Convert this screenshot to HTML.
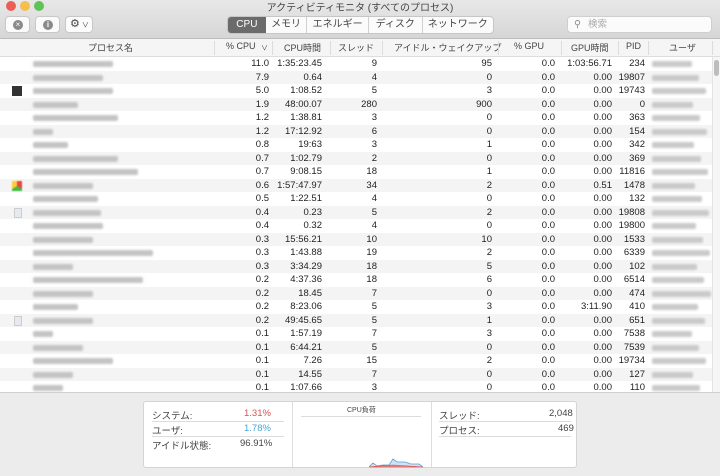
<!DOCTYPE html>
<html><head><meta charset="utf-8"><style>
*{margin:0;padding:0;box-sizing:border-box}
body{width:720px;height:476px;overflow:hidden;background:#ececec;font-family:"Liberation Sans","Noto Sans CJK JP",sans-serif;font-size:9.5px;color:#222;position:relative}
.tb{position:absolute;left:0;top:0;width:720px;height:39px;background:linear-gradient(#e8e8e8,#d6d6d6);border-bottom:1px solid #bdbdbd}
.title{position:absolute;top:-1px;left:0;width:720px;text-align:center;font-size:10px;color:#444}
.dot{position:absolute;top:1px;width:10px;height:10px;border-radius:50%}
.btn{position:absolute;top:16px;height:17px;background:#fbfbfb;border:1px solid #c8c8c8;border-radius:4px}
.seg{position:absolute;top:16px;left:227px;width:267px;height:18px;display:flex;border:1px solid #c6c6c6;border-radius:4px;overflow:hidden;background:#fbfbfb}
.seg div{text-align:center;line-height:16px;font-size:10px;color:#444;border-left:1px solid #d0d0d0;white-space:nowrap;overflow:hidden}
.seg div.on{background:#6b6b6b;color:#fff;border:none}
.search{position:absolute;left:567px;top:16px;width:145px;height:17px;background:#fbfbfb;border:1px solid #cfcfcf;border-radius:4px;color:#aaa;font-size:9.5px;line-height:15px;padding-left:20px}
.hdr{position:absolute;top:39px;left:0;width:720px;height:18px;background:#f5f5f5;border-bottom:1px solid #ddd}
.hdr span,.row span{position:absolute;white-space:nowrap}
.hdr span{top:2px;color:#444;font-size:9px}
.sep{position:absolute;top:2px;width:1px;height:14px;background:#dcdcdc}
.rows{position:absolute;top:57px;left:0;width:712px;height:335px;overflow:hidden;background:#fff}
.row{position:relative;height:13.5px;line-height:13.5px}
.row:nth-child(even){background:#f4f4f4}
.r{text-align:right}
.bl{position:absolute;top:4px;height:6px;background:#c4c4c4;filter:blur(1px);border-radius:2px}
.sb{position:absolute;left:712px;top:57px;width:8px;height:335px;background:#f6f6f6;border-left:1px solid #e4e4e4}
.bottom{position:absolute;top:392px;left:0;width:720px;height:84px;background:#ececec;border-top:1px solid #d0d0d0}
.box{position:absolute;left:143px;top:401px;width:434px;height:67px;background:#fff;border:1px solid #d4d4d4;border-radius:3px}
.box .l{position:absolute;font-size:9.5px;color:#444}
.hl{position:absolute;height:1px;background:#dcdcdc}
</style></head><body>
<div class="tb">
<div class="dot" style="left:6px;background:#ec5f57"></div>
<div class="dot" style="left:20px;background:#f5be4f"></div>
<div class="dot" style="left:34px;background:#5fc454"></div>
<div class="title">アクティビティモニタ (すべてのプロセス)</div>
<div class="btn" style="left:5px;width:25px"><div style="position:absolute;left:7px;top:3px;width:10px;height:10px;border-radius:50%;background:#8a8a8a;color:#fff;font-size:8px;line-height:10px;text-align:center">×</div></div>
<div class="btn" style="left:35px;width:25px"><div style="position:absolute;left:7px;top:3px;width:10px;height:10px;border-radius:50%;background:#8a8a8a;color:#fff;font-size:8px;font-weight:bold;line-height:10px;text-align:center">i</div></div>
<div class="btn" style="left:65px;width:28px;font-size:11px;line-height:15px;padding-left:4px;color:#444">⚙<span style="font-size:7px;margin-left:2px">∨</span></div>
<div class="seg"><div class="on" style="width:38px">CPU</div><div style="border-left:none;width:41px">メモリ</div><div style="width:62px">エネルギー</div><div style="width:54px">ディスク</div><div style="width:72px">ネットワーク</div></div>
<div class="search"><span style="position:absolute;left:6px;top:0;color:#888">⚲</span>検索</div>
</div>
<div class="hdr">
<span style="left:88px">プロセス名</span><div class="sep" style="left:214px"></div>
<span style="left:226px">% CPU</span><span style="left:261px;font-size:7px;top:4px">∨</span><div class="sep" style="left:272px"></div>
<span style="left:284px">CPU時間</span><div class="sep" style="left:330px"></div>
<span style="left:338px">スレッド</span><div class="sep" style="left:382px"></div>
<span style="left:394px">アイドル・ウェイクアップ</span><div class="sep" style="left:498px"></div>
<span style="left:514px">% GPU</span><div class="sep" style="left:561px"></div>
<span style="left:571px">GPU時間</span><div class="sep" style="left:618px"></div>
<span style="left:626px">PID</span><div class="sep" style="left:648px"></div>
<span style="left:669px">ユーザ</span><div class="sep" style="left:712px"></div>
</div>
<div class="rows" id="rows"></div>
<div class="sb"><div style="position:absolute;left:1px;top:3px;width:5px;height:16px;background:#bdbdbd;border-radius:3px"></div></div>
<div class="bottom"></div>
<div class="box">
<span class="l" style="left:8px;top:6px">システム:</span><span class="l" style="left:100px;top:6px;color:#d9534f">1.31%</span>
<div class="hl" style="left:8px;top:19px;width:132px"></div>
<span class="l" style="left:8px;top:21px">ユーザ:</span><span class="l" style="left:100px;top:21px;color:#4aa3d8">1.78%</span>
<div class="hl" style="left:8px;top:34px;width:132px"></div>
<span class="l" style="left:8px;top:36px">アイドル状態:</span><span class="l" style="left:96px;top:36px">96.91%</span>
<div style="position:absolute;left:148px;top:0;width:1px;height:65px;background:#ddd"></div>
<div style="position:absolute;left:287px;top:0;width:1px;height:65px;background:#ddd"></div>
<span class="l" style="left:203px;top:3px;font-size:7px">CPU負荷</span>
<div class="hl" style="left:157px;top:14px;width:120px"></div>
<svg style="position:absolute;left:225px;top:52px" width="60" height="14"><path d="M0 13 L4 9 L8 12 L14 11 L20 11 L24 5 L28 8 L36 8 L42 10 L50 10 L54 13" fill="#cfe3f3" stroke="#5b9fd4" stroke-width="0.8"/><path d="M0 13 L10 12 L24 11 L40 12 L54 13Z" fill="#e58c8c" stroke="#d94a4a" stroke-width="0.6"/></svg>
<span class="l" style="left:295px;top:6px">スレッド:</span><span class="l" style="left:405px;top:6px">2,048</span>
<div class="hl" style="left:295px;top:19px;width:132px"></div>
<span class="l" style="left:295px;top:21px">プロセス:</span><span class="l" style="left:414px;top:21px">469</span>
<div class="hl" style="left:295px;top:34px;width:132px"></div>
</div>
<script>
const d=[["11.0","1:35:23.45","9","95","0.0","1:03:56.71","234",80],
["7.9","0.64","4","0","0.0","0.00","19807",70],
["5.0","1:08.52","5","3","0.0","0.00","19743",80],
["1.9","48:00.07","280","900","0.0","0.00","0",45],
["1.2","1:38.81","3","0","0.0","0.00","363",85],
["1.2","17:12.92","6","0","0.0","0.00","154",20],
["0.8","19:63","3","1","0.0","0.00","342",35],
["0.7","1:02.79","2","0","0.0","0.00","369",85],
["0.7","9:08.15","18","1","0.0","0.00","11816",105],
["0.6","1:57:47.97","34","2","0.0","0.51","1478",60],
["0.5","1:22.51","4","0","0.0","0.00","132",65],
["0.4","0.23","5","2","0.0","0.00","19808",68],
["0.4","0.32","4","0","0.0","0.00","19800",70],
["0.3","15:56.21","10","10","0.0","0.00","1533",60],
["0.3","1:43.88","19","2","0.0","0.00","6339",120],
["0.3","3:34.29","18","5","0.0","0.00","102",40],
["0.2","4:37.36","18","6","0.0","0.00","6514",110],
["0.2","18.45","7","0","0.0","0.00","474",60],
["0.2","8:23.06","5","3","0.0","3:11.90","410",45],
["0.2","49:45.65","5","1","0.0","0.00","651",60],
["0.1","1:57.19","7","3","0.0","0.00","7538",20],
["0.1","6:44.21","5","0","0.0","0.00","7539",50],
["0.1","7.26","15","2","0.0","0.00","19734",80],
["0.1","14.55","7","0","0.0","0.00","127",40],
["0.1","1:07.66","3","0","0.0","0.00","110",30]];
let h="";
d.forEach((r,i)=>{let ic="";if(i==2)ic='<div style="position:absolute;left:12px;top:2px;width:10px;height:10px;background:#333"></div>';
if(i==9)ic='<div style="position:absolute;left:12px;top:2px;width:10px;height:10px;background:conic-gradient(#e44 0 33%,#4b4 0 66%,#fc3 0);filter:blur(.5px)"></div>';
if(i==11||i==19)ic='<div style="position:absolute;left:14px;top:2px;width:8px;height:10px;background:#e6e9f0;border:1px solid #ccc"></div>';
h+=`<div class="row">${ic}<div class="bl" style="left:33px;width:${r[7]}px"></div>
<span class="r" style="right:${712-269}px">${r[0]}</span><span class="r" style="right:${712-322}px">${r[1]}</span>
<span class="r" style="right:${712-377}px">${r[2]}</span><span class="r" style="right:${712-492}px">${r[3]}</span>
<span class="r" style="right:${712-555}px">${r[4]}</span><span class="r" style="right:${712-612}px">${r[5]}</span>
<span class="r" style="right:${712-645}px">${r[6]}</span><div class="bl" style="left:652px;width:${40+(i*7)%20}px;background:#cacaca"></div></div>`});
document.getElementById("rows").innerHTML=h;
</script>
</body></html>
